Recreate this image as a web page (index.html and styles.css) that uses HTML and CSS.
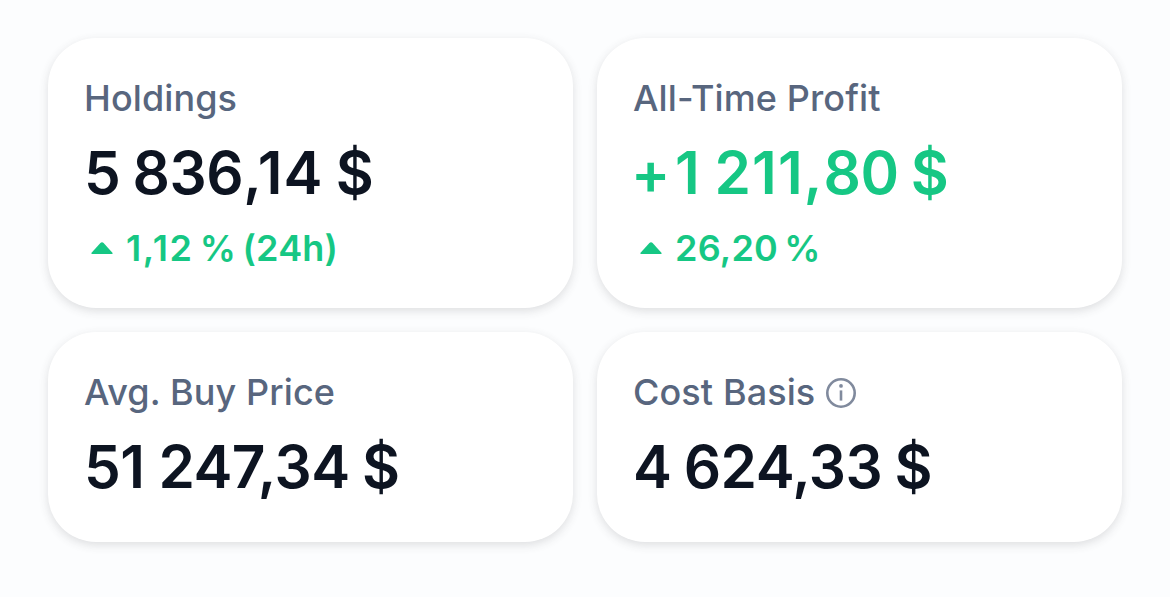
FILE: index.html
```html
<!DOCTYPE html>
<html lang="en">

<head>
  <meta charset="UTF-8">
  <title>Portfolio</title>
  <link rel="stylesheet" href="styles.css">
</head>

<body>
  <div class="stats">
    <!-- Holdings -->
    <div class="card">
      <div class="label"><span>Holdings</span></div>
      <div class="value">5 836<span class="wide">,14</span> $</div>
      <div class="change">
        <svg class="arrow" viewBox="0 0 24 14"><path d="M2 13 Q.6 13 1.8 11.6 L10.4 2 Q12 .4 13.6 2 L22.2 11.6 Q23.4 13 22 13 Z"/></svg>
        <span><span class="wide">1,12</span> % (24h)</span>
      </div>
    </div>
    <!-- All-Time Profit -->
    <div class="card">
      <div class="label"><span>All-Time Profit</span></div>
      <div class="value profit"><span class="sign">+</span><span class="wide">1 211,</span>80 $</div>
      <div class="change">
        <svg class="arrow" viewBox="0 0 24 14"><path d="M2 13 Q.6 13 1.8 11.6 L10.4 2 Q12 .4 13.6 2 L22.2 11.6 Q23.4 13 22 13 Z"/></svg>
        <span>26,20 %</span>
      </div>
    </div>
    <!-- Avg. Buy Price -->
    <div class="card">
      <div class="label"><span>Avg. Buy Price</span></div>
      <div class="value">51<span class="wide"> </span>247,34 $</div>
    </div>
    <!-- Cost Basis -->
    <div class="card">
      <div class="label">
        <span>Cost Basis</span>
        <svg class="info" viewBox="0 0 32 32"><circle cx="16" cy="16" r="13.7"/><path d="M16 13.4v10.2"/><circle class="dot" cx="16" cy="8.9" r="1.9"/></svg>
      </div>
      <div class="value">4 624,33 $</div>
    </div>
  </div>
</body>

</html>
```
FILE: styles.css
```css
* {
  margin: 0;
  padding: 0;
  box-sizing: border-box;
}

body {
  background: #fcfdfe;
  font-family: Inter, "Liberation Sans", sans-serif;
}

.stats {
  display: grid;
  grid-template-columns: 525px 525px;
  grid-template-rows: 270px 210px;
  gap: 24px;
  padding: 38px 48px;
}

.card {
  padding: 35px 36px;
  border-radius: 48px;
  background: #fff;
  box-shadow: 0 3px 10px rgba(60, 64, 70, 0.16);
}

.label {
  display: flex;
  align-items: center;
  height: 50px;
  font-size: 36px;
  font-weight: 450;
  letter-spacing: 0.1px;
  color: #58667e;
}

.value {
  height: 100px;
  line-height: 100px;
  font-size: 58.5px;
  font-weight: 600;
  letter-spacing: -0.5px;
  word-spacing: -2px;
  color: #0d1421;
  white-space: nowrap;
}

.profit {
  color: #16c784;
}

.sign {
  margin: 0 5px 0 -2px;
}

/* looser tracking around the narrow 1s */
.wide {
  letter-spacing: 1.1px;
}

.change {
  display: flex;
  align-items: center;
  height: 50px;
  font-size: 36px;
  font-weight: 600;
  letter-spacing: 0.2px;
  word-spacing: -3px;
  color: #16c784;
}

.change .wide {
  letter-spacing: 1.6px;
}

.arrow {
  width: 24px;
  height: 14px;
  margin: 0 12px 0 6px;
  fill: currentColor;
}

.info {
  width: 32px;
  height: 32px;
  margin: 2px 0 0 10px;
  fill: none;
  stroke: #808a9d;
  stroke-width: 2.6;
}

.dot {
  fill: #808a9d;
  stroke: none;
}
```
